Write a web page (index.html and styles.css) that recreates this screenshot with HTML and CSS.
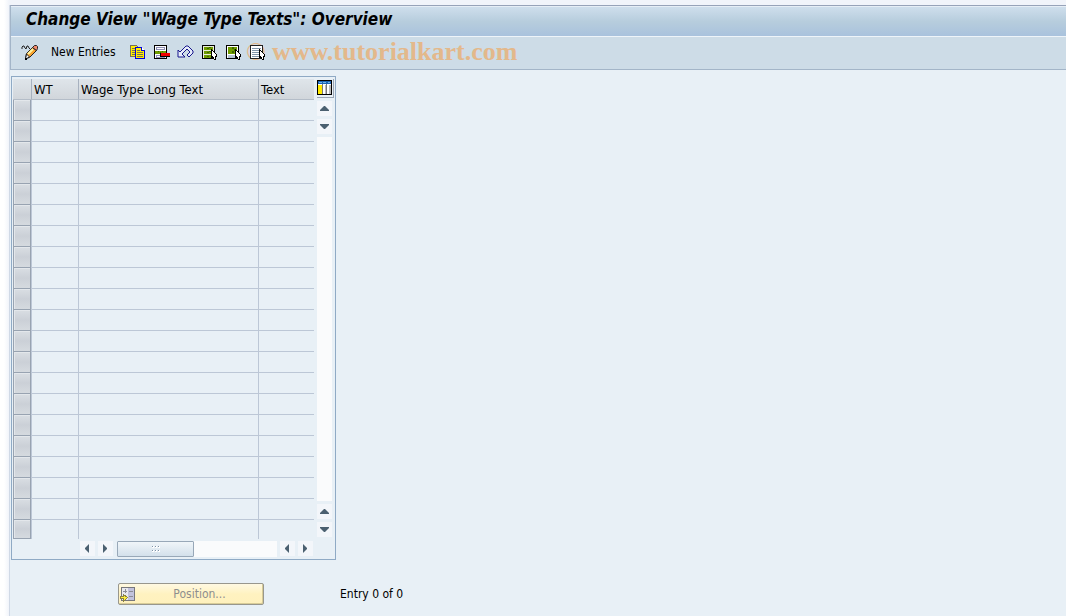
FILE: index.html
```html
<!DOCTYPE html>
<html lang="en">
<head>
  <meta charset="UTF-8">
  <meta name="viewport" content="width=device-width, initial-scale=1.0">
  <title>Change View "Wage Type Texts": Overview</title>
  <link rel="stylesheet" href="styles.css">
</head>
<body>

<div class="window">
  <!-- Title bar and application toolbar -->
  <header class="header">
    <h1 class="title">Change View "Wage Type Texts": Overview</h1>
    <div class="toolbar">
      <button class="tool" type="button" aria-label="Display / Change">
        <svg width="18" height="16" viewBox="0 0 18 16">
          <path d="M1 5V3l1-1h1l1 2 1 1 1-3h1l1 2 1 1" fill="none" stroke="#222" />
          <path d="M4.500 14.500l1-5 6-6 4 3-7 7z" fill="#f7a22c" stroke="#222" />
          <path d="M7 10l5-5" stroke="#fff3a0" stroke-width="2" />
          <path d="M11.500 3.500l2-2h2l1 1v2l-1 2z" fill="#f0886c" stroke="#222" />
          <path d="M5.500 10l3 3-4 2z" fill="#fff" stroke="#222" />
          <path d="M4 14h2v2H4z" fill="#000" />
        </svg>
      </button>
      <button class="tool tool-text" type="button">New Entries</button>
      <button class="tool" type="button" aria-label="Copy">
        <svg width="18" height="16" viewBox="0 0 18 16" shape-rendering="crispEdges">
          <path d="M1.500 1.500h6l3 3v8h-9z" fill="#ffee00" stroke="#77705a" />
          <path d="M3 4.500h4M3 6.500h3M3 8.500h3M3 10.500h3" stroke="#77705a" />
          <path d="M6.500 3.500h6l3 3v8h-9z" fill="#ffee00" stroke="#0000e0" />
          <path d="M12.500 3.500v3h3" fill="#fff" stroke="#0000e0" />
          <path d="M8 6.500h3M8 8.500h6M8 10.500h6M8 12.500h6" stroke="#77705a" />
        </svg>
      </button>
      <button class="tool" type="button" aria-label="Delete">
        <svg width="18" height="16" viewBox="0 0 18 16" shape-rendering="crispEdges">
          <path d="M1.500 1.500h12v13h-12z" fill="#fff" stroke="#000" />
          <path d="M3.500 3.500h8v2h-8zM3.500 11.500h8v2h-8z" fill="#fff" stroke="#8f8fb5" />
          <path d="M2 7h11v3H2z" fill="#6f9c00" />
          <path d="M5 7h1v1H5zM7 8h1v1H7zM9 7h1v1H9z" fill="#3e6800" />
          <path d="M7 9h10v4H7z" fill="#000" />
          <path d="M8 9h9v3H8z" fill="#f00000" />
        </svg>
      </button>
      <button class="tool" type="button" aria-label="Undo">
        <svg width="18" height="16" viewBox="0 0 18 16">
          <path d="M1 6v7h7l-3-3 5-5 3 3-3 3 2 2 4-4V7l-5-5H9L3 8z" fill="#e6ecfa" stroke="#17178c" />
        </svg>
      </button>
      <button class="tool" type="button" aria-label="Select All">
        <svg width="18" height="16" viewBox="0 0 18 16" shape-rendering="crispEdges">
          <path d="M1.500 1.500h12v13h-12z" fill="#e8edda" stroke="#000" />
          <path d="M3 3h9v3H3zM3 7h9v3H3zM3 11h9v3H3z" fill="#6f9c00" />
          <path d="M8 3h2v1H8zM6 4h2v1H6zM8 7h2v1H8zM6 8h2v1H6zM6 12h2v1H6z" fill="#3e6800" />
          <path d="M10 5v9h1l1-1 1 3h2v-2l-1-1h2v-2z" fill="#000" />
          <path d="M11 7v5h1v1h1v2h1v-2l-1-1h2v-1z" fill="#fff" />
        </svg>
      </button>
      <button class="tool" type="button" aria-label="Select Block">
        <svg width="18" height="16" viewBox="0 0 18 16" shape-rendering="crispEdges">
          <path d="M1.500 1.500h12v13h-12z" fill="#fff" stroke="#000" />
          <path d="M3 3h9v7H3z" fill="#6f9c00" />
          <path d="M7 3h2v2H7zM9 5h2v2H9zM7 7h2v2H7z" fill="#3e6800" />
          <path d="M3 11h8v3H3z" fill="#b5c5d3" />
          <path d="M10 5v9h1l1-1 1 3h2v-2l-1-1h2v-2z" fill="#000" />
          <path d="M11 7v5h1v1h1v2h1v-2l-1-1h2v-1z" fill="#fff" />
        </svg>
      </button>
      <button class="tool" type="button" aria-label="Deselect All">
        <svg width="18" height="16" viewBox="0 0 18 16" shape-rendering="crispEdges">
          <path d="M1.500 1.500h12v13h-12z" fill="#fff" stroke="#222" />
          <path d="M3 4.500h9M3 6.500h9M3 8.500h9M3 10.500h9M3 12.500h9" stroke="#8195a8" />
          <path d="M10 5v9h1l1-1 1 3h2v-2l-1-1h2v-2z" fill="#000" />
          <path d="M11 7v5h1v1h1v2h1v-2l-1-1h2v-1z" fill="#fff" />
        </svg>
      </button>
      <span class="watermark">© www.tutorialkart.com</span>
    </div>
  </header>

  <main class="content">
    <!-- Table control -->
    <div class="table-control">
      <table class="grid">
        <colgroup>
          <col class="col-select">
          <col class="col-wt">
          <col class="col-long">
          <col class="col-text">
        </colgroup>
        <thead>
          <tr><th></th><th>WT</th><th>Wage Type Long Text</th><th>Text</th></tr>
        </thead>
        <tbody>
          <tr><td><button class="row-select" type="button" aria-label="Row 1"></button></td><td></td><td></td><td></td></tr>
          <tr><td><button class="row-select" type="button" aria-label="Row 2"></button></td><td></td><td></td><td></td></tr>
          <tr><td><button class="row-select" type="button" aria-label="Row 3"></button></td><td></td><td></td><td></td></tr>
          <tr><td><button class="row-select" type="button" aria-label="Row 4"></button></td><td></td><td></td><td></td></tr>
          <tr><td><button class="row-select" type="button" aria-label="Row 5"></button></td><td></td><td></td><td></td></tr>
          <tr><td><button class="row-select" type="button" aria-label="Row 6"></button></td><td></td><td></td><td></td></tr>
          <tr><td><button class="row-select" type="button" aria-label="Row 7"></button></td><td></td><td></td><td></td></tr>
          <tr><td><button class="row-select" type="button" aria-label="Row 8"></button></td><td></td><td></td><td></td></tr>
          <tr><td><button class="row-select" type="button" aria-label="Row 9"></button></td><td></td><td></td><td></td></tr>
          <tr><td><button class="row-select" type="button" aria-label="Row 10"></button></td><td></td><td></td><td></td></tr>
          <tr><td><button class="row-select" type="button" aria-label="Row 11"></button></td><td></td><td></td><td></td></tr>
          <tr><td><button class="row-select" type="button" aria-label="Row 12"></button></td><td></td><td></td><td></td></tr>
          <tr><td><button class="row-select" type="button" aria-label="Row 13"></button></td><td></td><td></td><td></td></tr>
          <tr><td><button class="row-select" type="button" aria-label="Row 14"></button></td><td></td><td></td><td></td></tr>
          <tr><td><button class="row-select" type="button" aria-label="Row 15"></button></td><td></td><td></td><td></td></tr>
          <tr><td><button class="row-select" type="button" aria-label="Row 16"></button></td><td></td><td></td><td></td></tr>
          <tr><td><button class="row-select" type="button" aria-label="Row 17"></button></td><td></td><td></td><td></td></tr>
          <tr><td><button class="row-select" type="button" aria-label="Row 18"></button></td><td></td><td></td><td></td></tr>
          <tr><td><button class="row-select" type="button" aria-label="Row 19"></button></td><td></td><td></td><td></td></tr>
          <tr><td><button class="row-select" type="button" aria-label="Row 20"></button></td><td></td><td></td><td></td></tr>
          <tr><td><button class="row-select" type="button" aria-label="Row 21"></button></td><td></td><td></td><td></td></tr>
        </tbody>
      </table>

      <div class="vscroll">
        <button class="config" type="button" aria-label="Configuration">
          <svg width="15" height="15" viewBox="0 0 15 15" shape-rendering="crispEdges">
            <path d="M0 0h15v15H0z" fill="#000" />
            <path d="M1 1h13v13H1z" fill="#fff" />
            <path d="M1 1h13v3H1z" fill="#1b64b4" />
            <path d="M2 2h3v1H2zM6 2h3v1H6zM11 2h2v1h-2z" fill="#6fb2ea" />
            <path d="M1 5h4v9H1z" fill="#ffe900" />
            <path d="M5 4h1v10H5zM9 4h1v10H9z" fill="#777" />
            <path d="M8 5h1v9H8zM12 5h2v9h-2z" fill="#bbb" />
          </svg>
        </button>
        <button class="arrow" type="button" aria-label="Page up"><svg width="9" height="5" viewBox="0 0 9 5"><path d="M0 4l4-4h1l4 4v1H0z" /></svg></button>
        <button class="arrow" type="button" aria-label="Line down"><svg width="9" height="5" viewBox="0 0 9 5"><path d="M0 0h9v1L5 5H4L0 1z" /></svg></button>
        <div class="vtrack"></div>
        <button class="arrow" type="button" aria-label="Line up"><svg width="9" height="5" viewBox="0 0 9 5"><path d="M0 4l4-4h1l4 4v1H0z" /></svg></button>
        <button class="arrow" type="button" aria-label="Page down"><svg width="9" height="5" viewBox="0 0 9 5"><path d="M0 0h9v1L5 5H4L0 1z" /></svg></button>
      </div>

      <div class="hscroll">
        <button class="arrow" type="button" aria-label="First column"><svg width="5" height="9" viewBox="0 0 5 9"><path d="M4 0L0 4v1l4 4z" /></svg></button>
        <button class="arrow" type="button" aria-label="Next column"><svg width="5" height="9" viewBox="0 0 5 9"><path d="M0 0l4 4v1L0 9z" /></svg></button>
        <div class="htrack">
          <button class="thumb" type="button" aria-label="Scroll">
            <svg width="8" height="6" viewBox="0 0 8 6" shape-rendering="crispEdges">
              <path d="M0 0h2v2H0zM3 0h2v2H3zM6 0h2v2H6zM0 4h2v2H0zM3 4h2v2H3zM6 4h2v2H6z" fill="#fff" />
              <path d="M0 0h1v1H0zM3 0h1v1H3zM6 0h1v1H6zM0 4h1v1H0zM3 4h1v1H3zM6 4h1v1H6z" fill="#7f93a6" />
            </svg>
          </button>
        </div>
        <button class="arrow" type="button" aria-label="Previous column"><svg width="5" height="9" viewBox="0 0 5 9"><path d="M4 0L0 4v1l4 4z" /></svg></button>
        <button class="arrow" type="button" aria-label="Last column"><svg width="5" height="9" viewBox="0 0 5 9"><path d="M0 0l4 4v1L0 9z" /></svg></button>
      </div>
    </div>

    <div class="footer">
      <button class="position" type="button">
        <svg width="16" height="16" viewBox="0 0 16 16" shape-rendering="crispEdges">
          <path d="M1.500 1.500h13v13h-13z" fill="#e9e9ee" stroke="#77777c" />
          <path d="M8 2h6v12H8z" fill="#c2c2dc" />
          <path d="M3 5.500h4M5.500 3v4M9 5.500h4M9 10.500h4" stroke="#8c8c94" />
          <path d="M.5 10.500h3v-2l4 3-4 4v-3h-3z" fill="#ffee3c" stroke="#8c8340" />
        </svg>
        <span>Position...</span>
      </button>
      <span class="entry">Entry 0 of 0</span>
    </div>
  </main>
</div>

</body>
</html>
```

FILE: styles.css
```css
* {
  box-sizing: border-box;
}
body {
  margin: 0;
  padding: 5px 0 0 9px;
  min-height: 100vh;
  display: flex;
  background: linear-gradient(to right, #ffffff 4px, #f1f4fa 9px);
  color: #000;
  font-family: "DejaVu Sans Condensed", "DejaVu Sans", Tahoma, sans-serif;
  font-size: 12px;
  line-height: 16px;
}
button {
  margin: 0;
  padding: 0;
  border: none;
  background: none;
  color: inherit;
  font: inherit;
}
svg {
  display: block;
}

/* Window frame */
.window {
  flex: 1;
  border-left: 1px solid #d0d9e6;
  background-color: #e8f0f6;
}
.header {
  border: 1px solid #a3b5c8;
  border-top-color: #97a3b9;
  border-right: none;
}
.title {
  margin: 0;
  height: 31px;
  padding: 2px 15px;
  border-top: 1px solid #e6eef6;
  border-bottom: 1px solid #eef4f9;
  background: linear-gradient(#cedeec, #b7cddd 50%, #a9c2dd);
  font-size: 17px;
  font-style: italic;
  line-height: 20px;
}
.toolbar {
  position: relative;
  display: flex;
  align-items: center;
  gap: 6px;
  height: 32px;
  padding: 0 10px 2px;
  background-color: #cddce7;
}
.tool {
  z-index: 1;
}
.tool-text {
  margin: 0 7px 0 6px;
}
.watermark {
  position: absolute;
  left: 235px;
  top: 1px;
  color: #e3b88b;
  font-family: "Liberation Serif", serif;
  font-size: 26px;
  font-weight: bold;
  line-height: 28px;
  white-space: nowrap;
  pointer-events: none;
}

/* Table control */
.content {
  padding: 6px 1px;
}
.table-control {
  display: grid;
  grid-template-columns: 301px 15px;
  column-gap: 3px;
  row-gap: 2px;
  width: 325px;
  padding: 2px 1px;
  border: 1px solid #8faac5;
}
.grid {
  border-collapse: separate;
  border-spacing: 0;
  table-layout: fixed;
  width: 301px;
}
.col-select {
  width: 19px;
}
.col-wt {
  width: 47px;
}
.col-long {
  width: 180px;
}
.grid th {
  height: 21px;
  padding: 2px 2px 0;
  border-right: 1px solid #a7b1bf;
  border-bottom: 1px solid #b4bdc8;
  background: linear-gradient(#dfe5ea, #d1d6db);
  font-size: 13px;
  font-weight: normal;
  text-align: left;
}
.grid td {
  height: 21px;
  padding: 0;
  border-right: 1px solid #bcc7d6;
  border-bottom: 1px solid #bcc7d6;
}
.grid th:last-child,
.grid td:last-child {
  border-right: none;
}
.grid td:first-child {
  border-bottom: none;
}
.grid tbody tr:last-child td {
  height: 19px;
  border-bottom: none;
}
.row-select {
  display: block;
  width: 18px;
  height: 21px;
  border: 1px solid #98a3b1;
  border-top: none;
  background: linear-gradient(#d9dee3, #cbd0d7 50%, #d5dadf);
  box-shadow: inset 1px 1px #e3e7eb;
}
tbody tr:last-child .row-select {
  height: 19px;
}

/* Scroll bars */
.vscroll {
  display: flex;
  flex-direction: column;
  gap: 3px;
  padding-bottom: 2px;
}
.config {
  width: 17px;
  height: 19px;
  padding: 1px 1px 2px 0;
  border-right: 1px solid #9aa5b3;
  border-bottom: 1px solid #9aa5b3;
}
.arrow {
  display: flex;
  align-items: center;
  justify-content: center;
  flex: none;
  width: 15px;
  height: 15px;
  background-color: #f3f6fa;
}
.arrow path {
  fill: #4b6070;
}
.vtrack {
  flex: 1;
  background-color: #fafbfc;
}
.hscroll {
  display: flex;
  gap: 3px;
  padding: 0 1px 0 67px;
}
.htrack {
  flex: 1;
  margin-left: 1px;
  background-color: #fafbfc;
}
.thumb {
  display: flex;
  align-items: center;
  justify-content: center;
  width: 77px;
  height: 16px;
  border: 1px solid #98a8b8;
  border-radius: 1px;
  background: linear-gradient(#f0f5f9, #d3e0eb);
}

/* Position button and entry counter */
.footer {
  display: flex;
  align-items: center;
  gap: 76px;
  padding: 23px 0 0 107px;
}
.position {
  display: flex;
  align-items: center;
  width: 146px;
  height: 22px;
  padding-left: 1px;
  border: 1px solid #98978d;
  border-radius: 2px;
  background: linear-gradient(#fff9e2, #fff2c0 50%, #fff1bd);
  box-shadow: inset -1px -1px #d8cc98;
  color: #8e8e8e;
}
.position span {
  flex: 1;
  text-align: center;
}
```
